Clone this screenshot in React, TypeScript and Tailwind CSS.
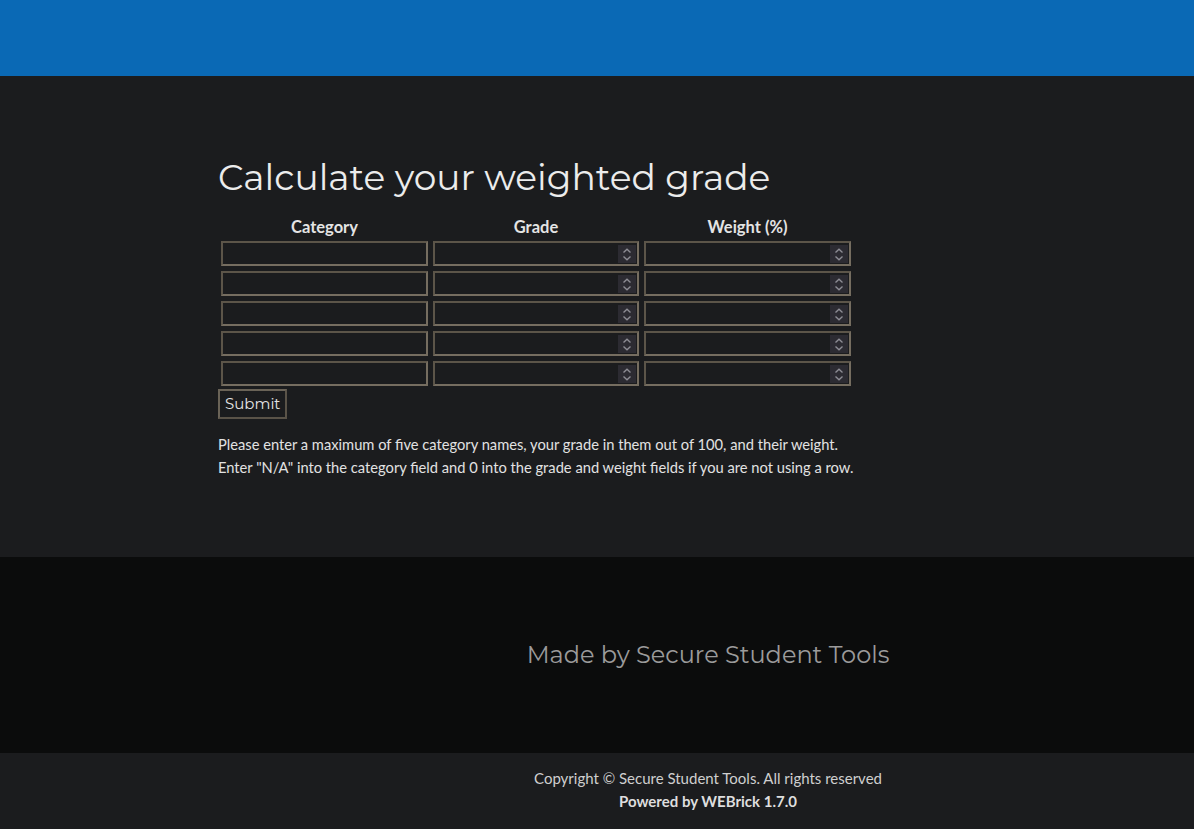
import React from 'react';

const mont = "font-['Montserrat','Open_Sans',sans-serif]";
const lato = "font-['Lato','Liberation_Sans',sans-serif]";

const inputCls =
  'block h-[25px] w-full bg-[#1b1c1e] text-[#ddd] border-2 border-t-[#5c5549] border-l-[#5c5549] border-b-[#756d60] border-r-[#756d60] px-1 outline-none [color-scheme:dark] text-[13px] [&::-webkit-inner-spin-button]:appearance-none [&::-webkit-outer-spin-button]:appearance-none';

function NumberField() {
  return (
    <div className="relative h-[25px]">
      <input type="number" className={`${inputCls} pr-6`} />
      <span className="pointer-events-none absolute right-[3px] top-[4px] flex h-[18px] w-[18px] items-center justify-center bg-[#2c2b32]">
        <svg width="10" height="15" viewBox="0 0 10 15" fill="none" stroke="#8d8c94" strokeWidth="1.4">
          <path d="M1.5 5.5 5 2.3 8.5 5.5" />
          <path d="M1.5 9.5 5 12.7 8.5 9.5" />
        </svg>
      </span>
    </div>
  );
}

export default function App() {
  const rows = [0, 1, 2, 3, 4];

  return (
    <div className={`min-h-[829px] flex flex-col bg-[#1b1c1e] ${lato}`}>
      <header className="h-[76px] bg-[#0a69b5]" />

      <main className="h-[481px] pt-[78px] pl-[218px]">
        <h1 className={`${mont} text-[36px] leading-[46px] text-[#ececec]`}>
          Calculate your weighted grade
        </h1>

        <form className="mt-[18px] w-[636px]">
          <div className="grid grid-cols-[207px_206px_207px] gap-x-[5px] gap-y-[5px] px-[3px]">
            <div className="text-center text-[16.5px] font-bold text-[#e4e4e4] leading-[18px]">Category</div>
            <div className="text-center text-[16.5px] font-bold text-[#e4e4e4] leading-[18px]">Grade</div>
            <div className="text-center text-[16.5px] font-bold text-[#e4e4e4] leading-[18px]">Weight (%)</div>
            {rows.map((r) => (
              <React.Fragment key={r}>
                <input type="text" className={inputCls} />
                <NumberField />
                <NumberField />
              </React.Fragment>
            ))}
          </div>
          <button
            type="button"
            className={`${mont} mt-[3px] h-[30px] px-[5px] text-[15px] text-[#e4e4e4] bg-[#1b1c1e] border-2 border-t-[#6a6357] border-l-[#6a6357] border-b-[#5a5348] border-r-[#5a5348]`}
          >
            Submit
          </button>
        </form>

        <p className="mt-[14px] text-[14.7px] leading-[23px] text-[#e2e2e2]">
          Please enter a maximum of five category names, your grade in them out of 100, and their weight.
          <br />
          Enter "N/A" into the category field and 0 into the grade and weight fields if you are not using a row.
        </p>
      </main>

      <footer className="h-[196px] bg-[#0b0c0c] flex items-center">
        <div className="ml-[222px] flex-1 text-center">
          <span className={`${mont} text-[24px] text-[#9b9b9b]`}>Made by Secure Student Tools</span>
        </div>
      </footer>

      <div className="h-[76px] bg-[#1b1c1e] flex">
        <div className="ml-[222px] flex-1 text-center pt-[14px] text-[15px] leading-[23px]">
          <div className="text-[#cfcfcf]">Copyright © Secure Student Tools. All rights reserved</div>
          <div className="text-[#dedede] font-bold">Powered by WEBrick 1.7.0</div>
        </div>
      </div>
    </div>
  );
}
